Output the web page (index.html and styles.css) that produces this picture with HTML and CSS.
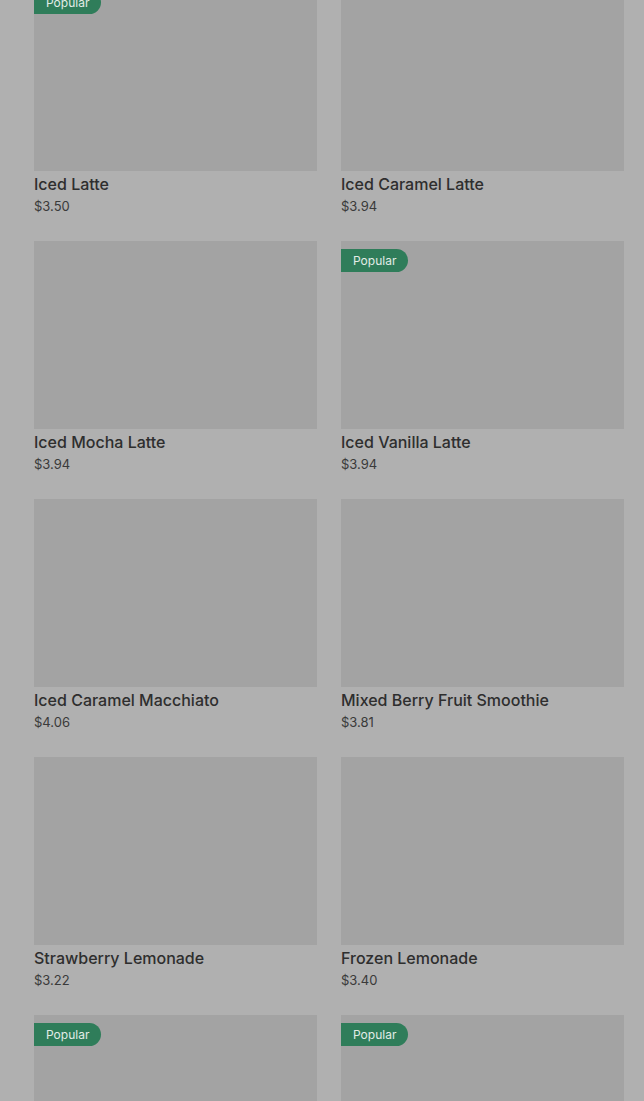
FILE: index.html
```html
<!DOCTYPE html>
<html lang="en">
<head>
    <meta charset="UTF-8">
    <meta name="viewport" content="width=device-width, initial-scale=1.0">
    <title>Menu</title>
    <link rel="stylesheet" href="styles.css">
</head>
<body>
    <div class="menu-grid">
        <div class="item">
            <div class="item-image"><span class="badge">Popular</span></div>
            <div class="item-name">Iced Latte</div>
            <div class="item-price">$3.50</div>
        </div>
        <div class="item">
            <div class="item-image"></div>
            <div class="item-name">Iced Caramel Latte</div>
            <div class="item-price">$3.94</div>
        </div>
        <div class="item">
            <div class="item-image"></div>
            <div class="item-name">Iced Mocha Latte</div>
            <div class="item-price">$3.94</div>
        </div>
        <div class="item">
            <div class="item-image"><span class="badge">Popular</span></div>
            <div class="item-name">Iced Vanilla Latte</div>
            <div class="item-price">$3.94</div>
        </div>
        <div class="item">
            <div class="item-image"></div>
            <div class="item-name">Iced Caramel Macchiato</div>
            <div class="item-price">$4.06</div>
        </div>
        <div class="item">
            <div class="item-image"></div>
            <div class="item-name">Mixed Berry Fruit Smoothie</div>
            <div class="item-price">$3.81</div>
        </div>
        <div class="item">
            <div class="item-image"></div>
            <div class="item-name">Strawberry Lemonade</div>
            <div class="item-price">$3.22</div>
        </div>
        <div class="item">
            <div class="item-image"></div>
            <div class="item-name">Frozen Lemonade</div>
            <div class="item-price">$3.40</div>
        </div>
        <div class="item">
            <div class="item-image"><span class="badge">Popular</span></div>
        </div>
        <div class="item">
            <div class="item-image"><span class="badge">Popular</span></div>
        </div>
    </div>
</body>
</html>
```

FILE: styles.css
```css
body {
    margin: 0;
    background: #b0b0b0;
    font-family: Inter, "Noto Sans", sans-serif;
    overflow: hidden;
}
.menu-grid {
    display: grid;
    grid-template-columns: 283px 283px;
    column-gap: 24px;
    row-gap: 26px;
    padding: 0 20px 0 34px;
    margin-top: -17px;
}
.item-image {
    position: relative;
    height: 188px;
    background: #a3a3a3;
}
.badge {
    position: absolute;
    top: 8px;
    left: 0;
    height: 23px;
    line-height: 23px;
    padding: 0 12px;
    font-size: 12px;
    color: #e2ece6;
    background: #2f7d5a;
    border-radius: 0 12px 12px 0;
}
.item-name {
    padding-top: 3px;
    font-size: 16px;
    line-height: 20px;
    font-weight: 500;
    color: #2e2e2e;
}
.item-price {
    margin-top: 3px;
    font-size: 13px;
    line-height: 18px;
    color: #3a3a3a;
}
```
